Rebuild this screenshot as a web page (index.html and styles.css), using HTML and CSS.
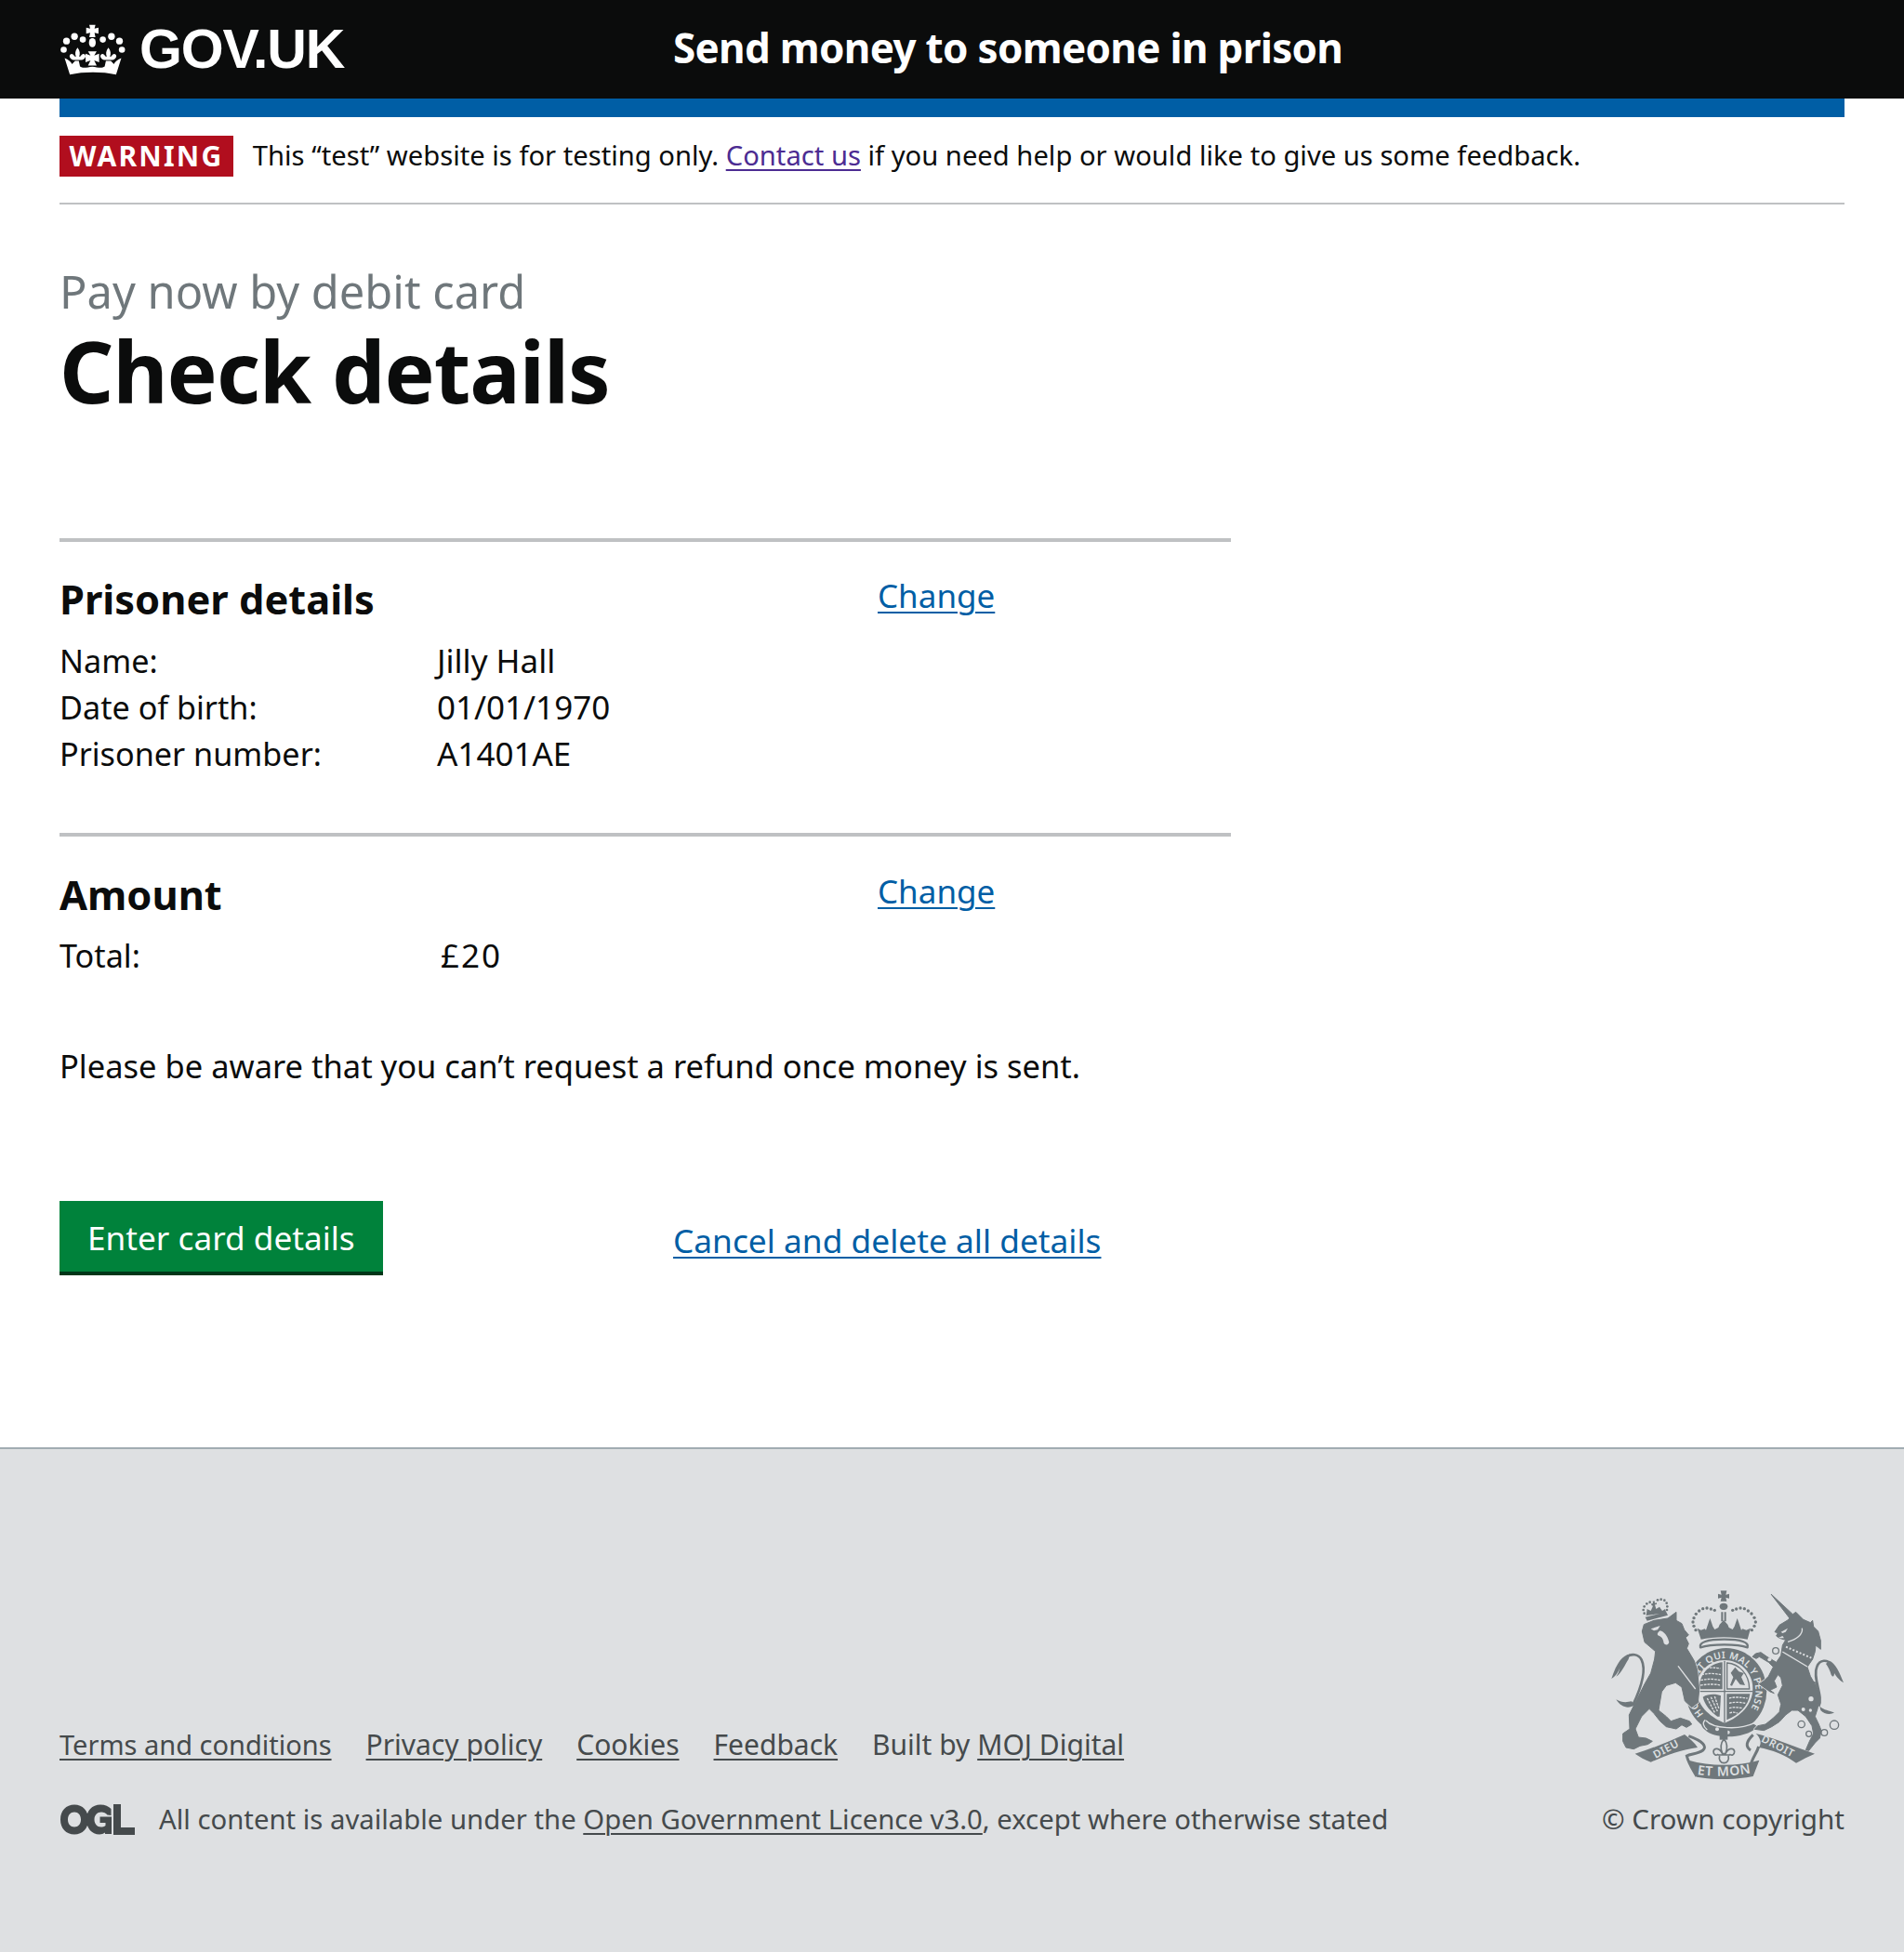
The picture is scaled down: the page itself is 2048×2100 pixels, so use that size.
FILE: index.html
```html
<!DOCTYPE html>
<html lang="en">
<head>
<meta charset="utf-8">
<title>Check details</title>
<link rel="stylesheet" href="styles.css">
</head>
<body>
<header class="site-header">
  <a class="brand" href="#">
    <svg class="crown" viewBox="12 12 216 166" aria-hidden="true">
      <g class="crown-fill">
        <path d="M108 14h20l-3 12 13-3v20l-13-3 3 14h-20l3-14-13 3V23l13 3z"/>
        <ellipse cx="118" cy="72" rx="11" ry="15"/>
        <circle cx="60" cy="52" r="11"/><circle cx="87" cy="62" r="10"/><circle cx="152" cy="62" r="10"/><circle cx="180" cy="52" r="11"/>
        <circle cx="34" cy="67" r="11"/><circle cx="206" cy="67" r="11"/><circle cx="25" cy="95" r="10"/><circle cx="214" cy="95" r="10"/>
        <path d="M70 88c-8 10-9 20-5 30l-5-2c-4-10-14-10-16-1 0 7 6 11 12 13h28c6-2 12-6 12-13-2-9-12-9-16 1l-5 2c4-10 3-20-5-30z"/>
        <path d="M170 88c-8 10-9 20-5 30l-5-2c-4-10-14-10-16-1 0 7 6 11 12 13h28c6-2 12-6 12-13-2-9-12-9-16 1l-5 2c4-10 3-20-5-30z"/>
        <path d="M104 100h28l-8 14 16-6v28l-16-6 8 16h-28l8-16-16 6v-28l16 6z"/>
        <path d="M45 176c45-10 105-10 150 0l17-54c-14 6-22 14-24 20l-10-11h-16l-4 18c-8 7-23 3-40 1-17 2-32 6-40-1l-4-18H62l-10 11c-2-6-10-14-24-20z"/>
      </g>
    </svg>
    <span class="brand-text">GOV.UK</span>
  </a>
  <a class="service" href="#">Send money to someone in prison</a>
</header>

<main class="wrap">
  <div class="bluebar"></div>
  <div class="phase">
    <strong class="tag">WARNING</strong>
    <span class="phase-text">This “test” website is for testing only. <a class="visited" href="#">Contact us</a> if you need help or would like to give us some feedback.</span>
  </div>

  <p class="caption">Pay now by debit card</p>
  <h1 class="title">Check details</h1>

  <section class="panel first">
    <div class="panel-main">
      <h2 class="panel-title">Prisoner details</h2>
      <dl class="facts">
        <dt>Name:</dt><dd>Jilly Hall</dd>
        <dt>Date of birth:</dt><dd>01/01/1970</dd>
        <dt>Prisoner number:</dt><dd>A1401AE</dd>
      </dl>
    </div>
    <a class="change" href="#">Change</a>
  </section>

  <section class="panel second">
    <div class="panel-main">
      <h2 class="panel-title">Amount</h2>
      <dl class="facts">
        <dt>Total:</dt><dd class="nudge">£20</dd>
      </dl>
    </div>
    <a class="change" href="#">Change</a>
  </section>

  <p class="notice">Please be aware that you can’t request a refund once money is sent.</p>

  <div class="actions">
    <a class="button" href="#">Enter card details</a>
    <a class="cancel" href="#">Cancel and delete all details</a>
  </div>
</main>

<footer class="site-footer">
  <div class="footer-left">
    <ul class="footer-links">
      <li><a href="#">Terms and conditions</a></li>
      <li><a href="#">Privacy policy</a></li>
      <li><a href="#">Cookies</a></li>
      <li><a href="#">Feedback</a></li>
      <li>Built by <a href="#">MOJ Digital</a></li>
    </ul>
    <div class="licence">
      <svg class="ogl" viewBox="0 0 81 33" aria-hidden="true">
        <path class="ogl-fill" fill-rule="evenodd" d="M16 0.500C25 0.500 31 7 31 16.500S25 32.500 16 32.500 1 26 1 16.500 7 0.500 16 0.500zM16 8.500c-4.200 0-7 3.200-7 8s2.800 8 7 8 7-3.200 7-8-2.800-8-7-8z"/>
        <path class="ogl-fill" d="M44 0.500c5 0 9 1.800 11.500 4.500v7l-4-.5C50 9.500 47.500 8.500 45 8.500c-4.500 0-7.500 3.300-7.500 8s3 8 7 8c2 0 3.500-.5 5-1.500v-3h-6v-6.500H56V32h-7v-1.500c-1.500 1.300-4 2-6 2-8.500 0-14-6.800-14-16 0-9.500 6-16 15-16z"/>
        <path class="ogl-fill" d="M58 0h8v25h15v8H58z"/>
      </svg>
      <span>All content is available under the <a href="#">Open Government Licence v3.0</a>, except where otherwise stated</span>
    </div>
  </div>
  <div class="footer-right">
    <svg class="arms" viewBox="9 15 756 612" aria-hidden="true">
      <defs>
        <path id="motto-ring" d="M311 417A98 105 0 1 1 443 423"/>
        <path id="etmon-arc" d="M290 612C340 620 410 618 468 606"/>
        <path id="lion-body" d="M118 128L150 115 195 108 222 88 222 115 240 125 248 145 262 162 252 170 262 190 256 205 268 225 280 245 290 275 296 340 292 380 272 395 250 375 240 330 220 316 190 325 175 345 170 375 165 405 190 425 205 440 235 430 265 440 272 450 255 460 240 452 222 465 190 458 170 440 150 415 135 400 110 425 90 465 100 492 125 495 145 505 130 515 105 520 85 530 60 525 50 505 50 480 72 465 70 420 95 370 120 320 140 285 152 240 155 215 120 185 112 150Z"/>
        <path id="uni-body" d="M168 30L238 95 248 88 260 100 272 112 295 122 302 115 305 135 320 150 328 180 328 208 312 195 310 215 302 240 285 265 295 295 315 330 325 360 318 400 310 425 322 450 330 470 325 495 310 510 290 535 280 533 292 505 305 480 300 455 280 425 255 405 235 405 215 420 195 442 170 458 145 470 115 466 125 455 150 450 175 430 195 410 200 385 190 355 205 325 200 300 190 290 178 310 186 330 165 340 178 350 165 345 130 320 145 310 160 295 175 265 160 250 140 238 130 232 120 238 108 232 118 222 135 218 155 232 185 250 200 228 205 195 215 178 195 172 185 165 190 155 180 152 195 130 220 115 228 108Z"/>
      </defs>

      <!-- royal crown -->
      <path class="arms-fill" d="M365 19h20l-3 13 11-3v15l-11-3 3 12h-20l3-12-11 3V29l11 3z"/>
      <ellipse class="arms-fill" cx="375" cy="70" rx="13" ry="11"/>
      <path class="arms-fill" d="M367 88h6v30h-6zM377 88h6v30h-6z"/>
      <g class="arms-fill">
        <circle cx="346" cy="82" r="5"/><circle cx="334" cy="78" r="5"/><circle cx="321" cy="75" r="5"/><circle cx="308" cy="77" r="5"/><circle cx="296" cy="84" r="5"/><circle cx="286" cy="94" r="5"/><circle cx="279" cy="107" r="5"/><circle cx="276" cy="120" r="5"/><circle cx="279" cy="133" r="5"/><circle cx="285" cy="146" r="5"/>
        <circle cx="404" cy="82" r="5"/><circle cx="416" cy="78" r="5"/><circle cx="429" cy="75" r="5"/><circle cx="442" cy="77" r="5"/><circle cx="454" cy="84" r="5"/><circle cx="465" cy="93" r="5"/><circle cx="474" cy="106" r="5"/><circle cx="478" cy="120" r="5"/><circle cx="474" cy="133" r="5"/><circle cx="466" cy="146" r="5"/>
      </g>
      <path class="arms-fill" d="M290 140L302 146 314 142 318 146 322 134 326 122 331 108 336 122 340 134 346 144 358 138 362 128 375 114 388 128 392 138 404 144 410 134 414 122 419 108 424 122 428 134 432 146 436 142 448 146 462 140 452 176C410 166 340 166 302 176Z"/>
      <path class="arms-cap" d="M300 202C294 186 322 176 377 176 432 176 458 186 452 202 420 190 335 190 300 202Z"/>

      <!-- garter ring -->
      <ellipse class="arms-fill" cx="383" cy="342" rx="131" ry="138"/>
      <path class="arms-paper" d="M287 335C287 280 330 243 378 243 426 243 469 280 469 335 469 385 430 425 378 446 326 425 287 385 287 335Z"/>
      <!-- shield quarters -->
      <path class="arms-fill" d="M296 335C296 288 330 254 371 250V337H296Z"/>
      <path class="arms-lions" d="M308 272C325 266 345 266 364 270M304 290C325 284 348 286 366 290M301 308C325 302 348 304 366 308M300 324C325 320 348 320 366 324"/>
      <path class="arms-fill" d="M385 352H460C455 392 425 420 385 436Z"/>
      <path class="arms-lions" d="M393 366C410 361 430 363 452 366M393 382C410 377 428 379 446 382M393 398C406 394 420 395 436 398M394 414C404 410 412 411 420 414"/>
      <path class="arms-shield" d="M386 252C425 255 458 288 458 336H386Z"/>
      <path class="arms-fill" d="M398 284L412 266 424 280 440 285 432 298 444 324 428 322 414 304 402 326 396 324 406 298Z"/>
      <path class="arms-fill" d="M308 362C325 350 355 352 366 358L362 425 355 425C335 410 315 390 308 362Z"/>
      <path class="arms-lions" d="M322 366L346 412M334 362L355 408M346 360L360 400"/>
      <path class="arms-shield" d="M378 245V446M287 344H469"/>

      <!-- buckle band -->
      <path class="arms-fill" d="M305 440C312 425 322 432 326 440 350 462 420 470 468 446L486 458C440 500 345 498 315 468 305 460 300 450 305 440Z"/>
      <path class="arms-cutline" d="M318 438C340 464 425 470 474 446M322 468C308 456 306 444 316 436"/>
      <circle class="arms-paper" cx="354" cy="466" r="6"/><circle class="arms-paper" cx="389" cy="476" r="6"/>
      <text class="arms-text ring-text"><textPath href="#motto-ring">HONI SOIT QUI MAL Y PENSE</textPath></text>

      <!-- lion -->
      <use class="arms-halo" href="#lion-body"/>
      <use class="arms-fill arms-soft" href="#lion-body"/>
      <path class="arms-line" d="M82 388C105 340 128 280 110 242 100 222 78 222 62 232"/>
      <path class="arms-fill" d="M72 224C50 226 30 250 13 303 25 296 33 286 40 268 38 280 33 290 28 296 45 286 55 260 68 240Z"/>
      <path class="arms-fill" d="M88 388C70 400 45 398 28 370 45 380 60 380 78 376Z"/>
      <path class="arms-cut" d="M140 142L170 132 162 145 150 148ZM170 148C182 150 194 165 198 182 202 192 188 198 182 188 180 178 178 170 168 165 160 164 158 156 170 148Z"/>
      <path class="arms-cutline" d="M228 262L284 336"/>
      <!-- lion crown -->
      <path class="arms-fill" d="M125 99L128 78 140 84 147 68 142 66 142 60 147 60 146 53 152 52 153 59 159 58 159 63 153 64 157 78 168 71 177 84 186 78 190 90ZM122 104L190 88 195 98 128 116Z"/>
      <g class="arms-fill">
        <circle cx="119" cy="92" r="4"/><circle cx="116" cy="81" r="4"/><circle cx="119" cy="70" r="4"/><circle cx="127" cy="61" r="4"/><circle cx="137" cy="56" r="4"/><circle cx="162" cy="49" r="4"/><circle cx="173" cy="47" r="4"/><circle cx="184" cy="50" r="4"/><circle cx="191" cy="59" r="4"/><circle cx="193" cy="70" r="4"/><circle cx="192" cy="81" r="4"/>
      </g>

      <!-- unicorn -->
      <g transform="translate(360 0)">
        <use class="arms-halo" href="#uni-body"/>
        <use class="arms-fill arms-soft" href="#uni-body"/>
        <path class="arms-line" d="M322 392C338 360 300 300 316 264 325 240 350 240 364 258"/>
        <path class="arms-fill" d="M355 245C375 250 390 285 402 316 385 305 378 295 372 285 372 295 368 300 362 290 358 275 350 262 345 255Z"/>
        <path class="arms-fill" d="M325 392C340 405 355 405 372 412 360 420 340 418 328 405Z"/>
        <path class="arms-cut" d="M200 152L222 140 215 152 205 156ZM190 172L205 165 210 172Z"/>
        <path class="arms-cutline" d="M268 140C272 160 250 176 222 184"/>
        <path class="arms-cutline" d="M205 216L285 264"/>
        <path class="arms-dash" d="M216 200L298 236"/>
        <g class="arms-ring">
          <circle cx="266" cy="450" r="11"/><circle cx="290" cy="481" r="9"/><circle cx="340" cy="477" r="10"/><circle cx="372" cy="452" r="14"/><circle cx="183" cy="213" r="10"/><circle cx="172" cy="298" r="9"/><circle cx="305" cy="322" r="8"/>
        </g>
        <circle class="arms-paper" cx="297" cy="368" r="8"/><circle class="arms-paper" cx="272" cy="402" r="6"/><circle class="arms-paper" cx="295" cy="405" r="5"/><circle class="arms-paper" cx="163" cy="241" r="6"/>
      </g>

      <!-- motto ribbon -->
      <path class="arms-fill" d="M89 545C140 530 200 505 249 483 265 495 282 510 291 525 240 532 190 550 140 572 120 565 105 555 89 545Z"/>
      <path class="arms-ribbon" d="M262 488C310 505 322 522 308 534 292 546 268 545 256 552 262 578 278 600 288 618"/>
      <path class="arms-fill" d="M262 566C330 586 420 586 490 566L470 618C405 630 345 630 288 620Z"/>
      <path class="arms-fill" d="M479 480C540 495 610 525 669 545 650 553 630 563 609 575 575 550 530 532 489 525 500 510 492 492 479 480Z"/>
      <path class="arms-ribbon" d="M488 522C482 545 465 560 460 590M470 484C448 505 444 522 462 534"/>
      <path class="arms-fill" d="M362 470h26v30h-26z"/>
      <path class="arms-ribbon thin" d="M376 497C364 512 364 528 371 545H381C388 528 388 512 376 497ZM371 545C362 525 344 525 342 538 342 550 352 552 358 546M381 545C390 525 408 525 410 538 410 550 400 552 394 546M356 549H396M362 552C358 565 366 575 376 575 386 575 394 565 390 552"/>

      <text class="arms-text ribbon-text" transform="translate(155 561) rotate(-28)">DIEU</text>
      <text class="arms-text ribbon-text" transform="translate(494 505) rotate(27)">DROIT</text>
      <text class="arms-text ribbon-text wide"><textPath href="#etmon-arc">ET MON</textPath></text>
    </svg>
    <p class="copyright">© Crown copyright</p>
  </div>
</footer>
</body>
</html>
```
FILE: styles.css
```css
* { box-sizing: border-box; }
html, body { margin: 0; padding: 0; }
body { min-height: 100vh; display: flex; flex-direction: column; font-family: "Noto Sans", "Open Sans", sans-serif; color: #0b0c0c; background: #fff; font-size: 32px; line-height: 50px; }
a { color: #005ea5; text-decoration: underline; text-underline-offset: 4px; text-decoration-thickness: 2px; }
a.visited { color: #4c2c92; }

.site-header { height: 106px; background: #0b0c0c; display: flex; align-items: center; padding: 0 64px; }
.site-header a { color: #fff; text-decoration: none; }
.brand { display: flex; align-items: center; width: 660px; }
.crown { width: 72px; height: 55px; margin-right: 14px; }
.crown-fill { fill: #fff; }
.brand-text { font-family: "Liberation Sans", sans-serif; font-weight: 700; font-size: 59px; line-height: 60px; letter-spacing: -1.2px; }
.service { font-weight: 700; font-size: 44px; line-height: 52px; letter-spacing: -0.7px; margin-top: -4px; }

.wrap { padding: 0 64px; }
.bluebar { height: 20px; background: #005ea5; }
.phase { display: flex; align-items: center; gap: 21px; height: 94px; padding-bottom: 9px; border-bottom: 2px solid #bfc1c3; font-size: 29.2px; }
.phase-text { margin-top: -2px; }
.tag { background: #b10e1e; color: #fff; font-size: 30px; line-height: 44px; height: 44px; padding: 0 10.500px; letter-spacing: 2.2px; font-weight: 700; }
.caption { margin: 64px 0 0; color: #6f777b; font-size: 48.800px; line-height: 58px; }
.title { margin: 9px 0 0; font-size: 91px; line-height: 96px; font-weight: 700; letter-spacing: -1px; }

.panel { width: 1260px; border-top: 4px solid #bfc1c3; display: flex; }
.first { margin-top: 132px; padding: 37px 0 60px; }
.second { padding: 38px 0 0; }
.second .panel-title { margin-bottom: 15px; }
.panel-main { width: 880px; }
.panel-title { margin: 0 0 16px; font-size: 43.400px; line-height: 50px; font-weight: 700; }
.facts { margin: 0; display: grid; grid-template-columns: 406px 1fr; font-size: 34.200px; }
.facts dd { margin: 0; font-size: 35px; }
.facts .nudge { padding-left: 4px; letter-spacing: 2px; }
.change { font-size: 35px; line-height: 50px; margin: -4px 0 0 0; }
.notice { margin: 69px 0 0; font-size: 34.500px; line-height: 50px; }
.actions { display: flex; align-items: flex-start; margin-top: 120px; }
.button { width: 348px; height: 80px; background: #00823b; color: #fff; text-decoration: none; font-size: 35.200px; line-height: 40px; padding: 19px 0 0 30px; box-shadow: inset 0 -4px 0 #003618; }
.cancel { font-size: 35.300px; line-height: 50px; margin: 17px 0 0 312px; }

.site-footer { flex: 1; margin-top: 185px; background: #dee0e2; border-top: 2px solid #a1acb2; padding: 151px 64px 0; display: flex; justify-content: space-between; color: #454a4c; font-size: 29.300px; }
.site-footer a { color: #454a4c; }
.footer-left { padding-top: 142px; }
.footer-links { list-style: none; margin: 0; padding: 0; display: flex; gap: 37px; font-size: 30px; }
.footer-links li:first-child { font-size: 29px; }
.licence { display: flex; align-items: center; gap: 26px; margin-top: 30px; }
.ogl { width: 81px; height: 33px; }
.ogl-fill { fill: #454a4c; }
.footer-right { display: flex; flex-direction: column; align-items: flex-end; }
.arms { width: 252px; height: 204px; }
.arms-fill { fill: #6f777b; }
.arms-soft { stroke: #6f777b; stroke-width: 3; stroke-linejoin: round; }
.arms-halo { fill: #dee0e2; stroke: #dee0e2; stroke-width: 7; stroke-linejoin: round; }
.arms-line { fill: none; stroke: #6f777b; stroke-width: 8; }
.arms-ribbon { fill: none; stroke: #6f777b; stroke-width: 9; }
.arms-ribbon.thin { stroke-width: 5; }
.arms-cap { fill: #dee0e2; stroke: #6f777b; stroke-width: 7; stroke-linejoin: round; }
.arms-ring { fill: none; stroke: #6f777b; stroke-width: 4; }
.arms-paper { fill: #dee0e2; }
.arms-cut { fill: #dee0e2; }
.arms-cutline { fill: none; stroke: #dee0e2; stroke-width: 4; }
.arms-dash { fill: none; stroke: #dee0e2; stroke-width: 6; stroke-dasharray: 6 6; }
.arms-shield { fill: none; stroke: #6f777b; stroke-width: 4; }
.arms-lions { fill: none; stroke: #dee0e2; stroke-width: 4; stroke-dasharray: 8 3; }
.arms-text { fill: #dee0e2; font-family: "Noto Sans", sans-serif; font-weight: 600; }
.ring-text { font-size: 31px; letter-spacing: 1px; }
.ribbon-text { font-size: 34px; letter-spacing: 2px; }
.ribbon-text.wide { font-size: 42px; letter-spacing: 2px; }
.copyright { margin: 18px 0 0; color: #454a4c; font-size: 29.600px; line-height: 50px; }
```
